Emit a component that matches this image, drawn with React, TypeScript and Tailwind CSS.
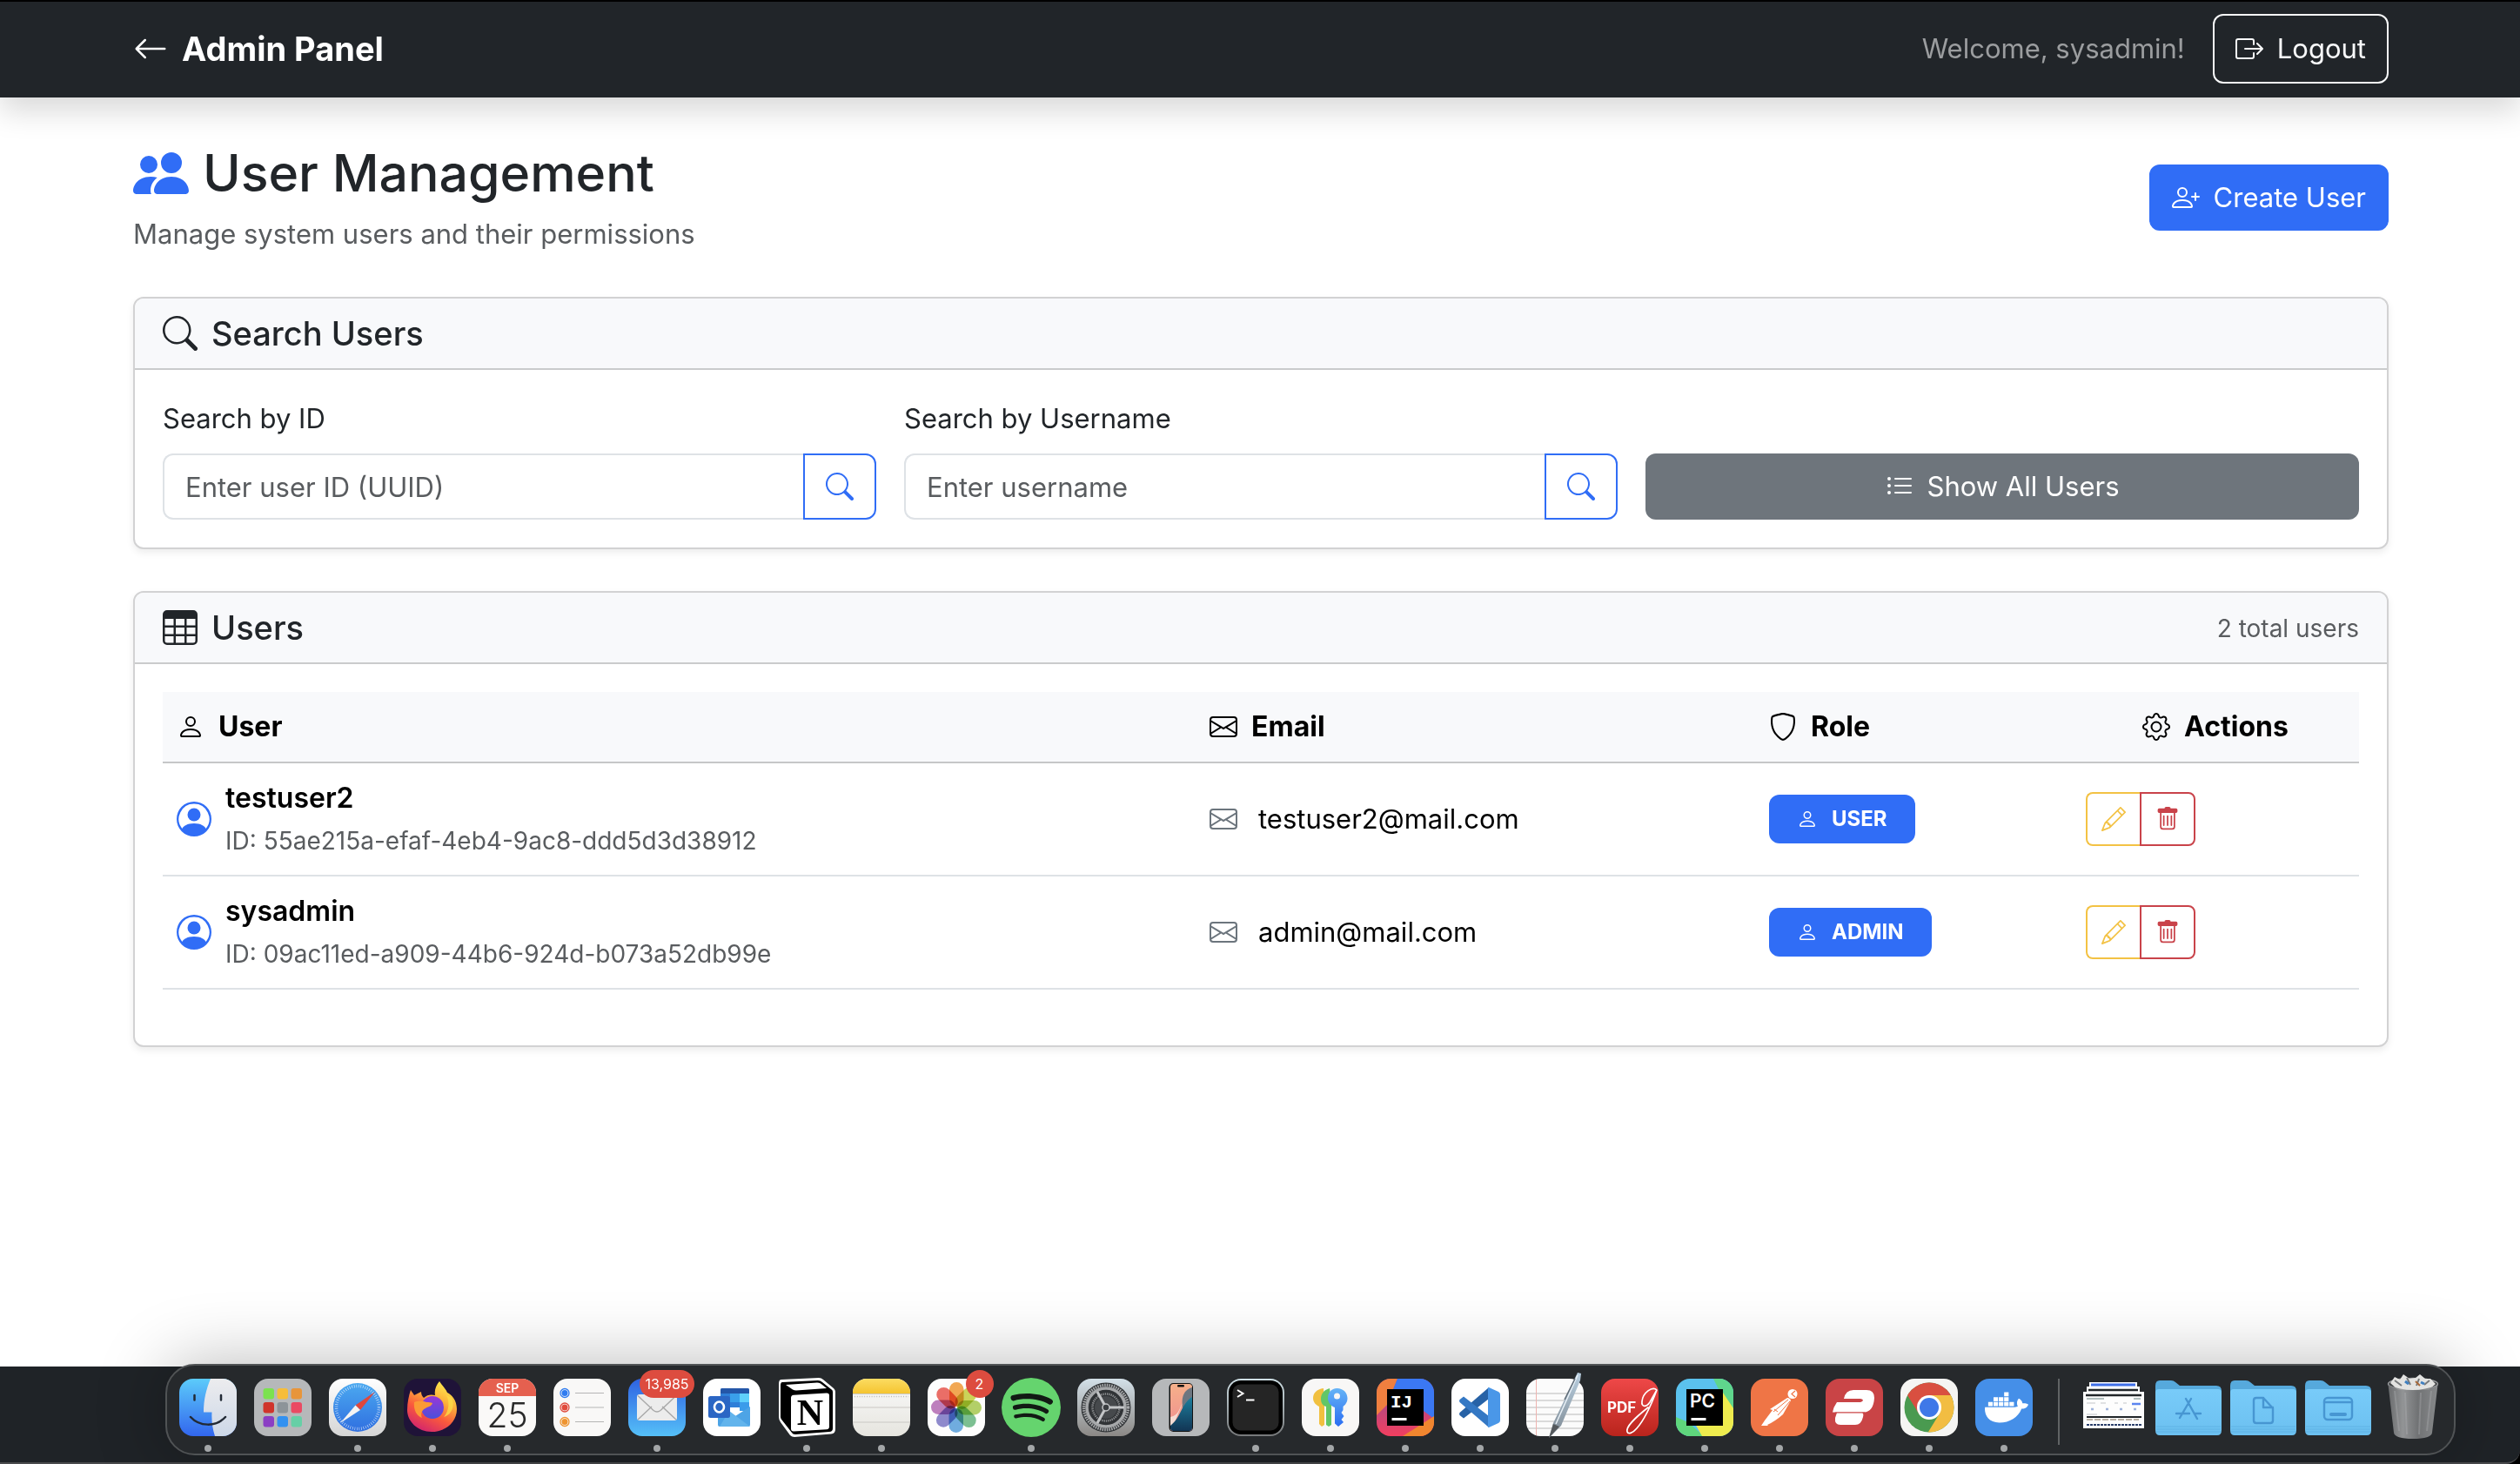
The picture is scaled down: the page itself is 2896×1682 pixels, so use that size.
import type { ReactNode } from "react";
import {
  BsArrowLeft,
  BsBoxArrowRight,
  BsEnvelope,
  BsGear,
  BsListUl,
  BsPencil,
  BsPeopleFill,
  BsPerson,
  BsPersonCircle,
  BsPersonPlus,
  BsSearch,
  BsShield,
  BsSpotify,
  BsTable,
} from "react-icons/bs";
import { FaDocker } from "react-icons/fa";

type User = { name: string; id: string; email: string; role: string };

const users: User[] = [
  { name: "testuser2", id: "55ae215a-efaf-4eb4-9ac8-ddd5d3d38912", email: "testuser2@mail.com", role: "USER" },
  { name: "sysadmin", id: "09ac11ed-a909-44b6-924d-b073a52db99e", email: "admin@mail.com", role: "ADMIN" },
];

function TrashIcon() {
  return (
    <svg viewBox="0 0 16 16" fill="currentColor" className="size-7" aria-hidden="true">
      <path d="M5.5 5.5A.5.5 0 0 1 6 6v6a.5.5 0 0 1-1 0V6a.5.5 0 0 1 .5-.5m2.5 0a.5.5 0 0 1 .5.5v6a.5.5 0 0 1-1 0V6a.5.5 0 0 1 .5-.5m3 .5a.5.5 0 0 0-1 0v6a.5.5 0 0 0 1 0z" />
      <path d="M14.5 3a1 1 0 0 1-1 1H13v9a2 2 0 0 1-2 2H5a2 2 0 0 1-2-2V4h-.5a1 1 0 0 1-1-1V2a1 1 0 0 1 1-1H6a1 1 0 0 1 1-1h2a1 1 0 0 1 1 1h3.500a1 1 0 0 1 1 1zM4.118 4 4 4.059V13a1 1 0 0 0 1 1h6a1 1 0 0 0 1-1V4.059L11.882 4z" />
    </svg>
  );
}

function Header() {
  return (
    <header className="relative z-10 border-t-2 border-black bg-[#212529] pl-0.5 shadow-[0_16px_32px_rgba(0,0,0,0.15)]">
      <div className="mx-auto flex max-w-[2640px] items-center justify-between px-6 pt-3.5 pb-4">
        <a href="#admin" className="flex items-center gap-4 text-[38px] leading-[60px] font-bold text-white">
          <BsArrowLeft className="size-10" aria-hidden="true" />
          Admin Panel
        </a>
        <div className="flex items-center gap-8">
          <span className="text-[31px] leading-[48px] text-[#9b9d9f]">Welcome, sysadmin!</span>
          <button type="button" className="flex items-center gap-4 rounded-xl border-2 border-[#f8f9fa] px-6 py-3.5 text-[31px] leading-[48px] text-[#f8f9fa]">
            <BsBoxArrowRight className="size-8" aria-hidden="true" />
            Logout
          </button>
        </div>
      </div>
    </header>
  );
}

function Card({ title, icon, aside, children }: { title: string; icon: ReactNode; aside?: ReactNode; children: ReactNode }) {
  return (
    <section className="mb-12 rounded-xl border-2 border-[#d2d2d3] bg-white shadow-[0_4px_8px_rgba(0,0,0,0.075)]">
      <div className="flex items-center justify-between rounded-t-[10px] border-b-2 border-[#cacbcc] bg-[#f8f9fb] px-8 py-4">
        <h2 className="flex items-center gap-4 text-[38px] leading-[48px] font-medium">
          {icon}
          {title}
        </h2>
        {aside}
      </div>
      <div className="p-8">{children}</div>
    </section>
  );
}

function SearchField({ id, label, placeholder }: { id: string; label: string; placeholder: string }) {
  return (
    <div>
      <label htmlFor={id} className="mb-4 block text-[31px] leading-[48px]">
        {label}
      </label>
      <div className="flex">
        <input
          id={id}
          type="text"
          placeholder={placeholder}
          className="h-[76px] min-w-0 flex-1 rounded-l-xl border-2 border-r-0 border-[#dee2e6] px-6 text-[31px] placeholder:text-[#595c5f]"
        />
        <button type="button" aria-label={label} className="flex h-[76px] items-center rounded-r-xl border-2 border-[#306df6] px-6 text-[#306df6]">
          <BsSearch className="size-8" aria-hidden="true" />
        </button>
      </div>
    </div>
  );
}

function HeadCell({ icon, text, center }: { icon: ReactNode; text: string; center?: boolean }) {
  return (
    <th scope="col" className="border-b-2 border-[#c6c7c8] bg-[#f8f9fb] p-4 text-[32px] leading-[48px] font-bold">
      <span className={center ? "flex items-center justify-center gap-4" : "flex items-center gap-4"}>
        {icon}
        {text}
      </span>
    </th>
  );
}

function UserRow({ user }: { user: User }) {
  return (
    <tr className="border-b-2 border-[#dee2e6]">
      <td className="p-4">
        <div className="flex items-center gap-4">
          <BsPersonCircle className="size-10 text-[#306df6]" aria-hidden="true" />
          <div className="text-[32px] leading-[48px]">
            <div className="font-semibold">{user.name}</div>
            <div className="h-12">
              <small className="text-[28px] text-[#595c5f]">ID: {user.id}</small>
            </div>
          </div>
        </div>
      </td>
      <td className="p-4">
        <div className="flex items-center gap-6 text-[31px] leading-[48px]">
          <BsEnvelope className="size-8 text-[#6c757d]" aria-hidden="true" />
          {user.email}
        </div>
      </td>
      <td className="p-4">
        <span className="inline-flex items-center gap-4 rounded-xl bg-[#306df6] px-8 py-4 align-middle text-2xl leading-6 font-bold text-white">
          <BsPerson className="size-6" aria-hidden="true" />
          {user.role}
        </span>
      </td>
      <td className="p-4">
        <div className="flex">
          <button type="button" aria-label={`Edit ${user.name}`} className="flex h-[62px] items-center rounded-l-lg border-2 border-r-0 border-[#f3c244] px-4 text-[#f3c244]">
            <BsPencil className="size-7" aria-hidden="true" />
          </button>
          <button type="button" aria-label={`Delete ${user.name}`} className="flex h-[62px] items-center rounded-r-lg border-2 border-[#c9434a] px-4 text-[#c9434a]">
            <TrashIcon />
          </button>
        </div>
      </td>
    </tr>
  );
}

/* ---------- Dock artwork, each drawn on a 66 x 66 tile ---------- */

function Tile({ children }: { children: ReactNode }) {
  return (
    <svg viewBox="0 0 66 66" className="size-[66px] overflow-visible" aria-hidden="true">
      {children}
    </svg>
  );
}

function Grad({ id, from, to }: { id: string; from: string; to: string }) {
  return (
    <linearGradient id={id} x1="0" y1="0" x2="0" y2="1">
      <stop offset="0" stopColor={from} />
      <stop offset="1" stopColor={to} />
    </linearGradient>
  );
}

function Finder() {
  return (
    <Tile>
      <Grad id="fdL" from="#5ccbfa" to="#3266ee" />
      <Grad id="fdR" from="#ececee" to="#cdd8e8" />
      <clipPath id="fdC"><rect width="66" height="66" rx="16" /></clipPath>
      <g clipPath="url(#fdC)">
        <rect width="66" height="66" fill="url(#fdL)" />
        <path d="M36 0C31 12 28 24 28 38.500h9.500C37 48 38 57 41 66h25V0z" fill="url(#fdR)" />
      </g>
      <path d="M17.500 19v5.500M48 19v5.500M13 44c10 11 29 12 40 0" stroke="#222a35" strokeWidth="2.500" strokeLinecap="round" fill="none" />
    </Tile>
  );
}

function Launchpad() {
  const colors = ["#7be24f", "#f6bd3a", "#e8953a", "#d0342c", "#8d9499", "#ea4a63", "#8b3fc4", "#3391f0", "#66cfa6"];
  return (
    <Tile>
      <rect width="66" height="66" rx="16" fill="#b6b8ba" />
      {colors.map((c, i) => (
        <rect key={c} x={10.5 + (i % 3) * 16} y={11 + Math.floor(i / 3) * 16} width="12.500" height="12.500" rx="3" fill={c} />
      ))}
    </Tile>
  );
}

function Safari() {
  return (
    <Tile>
      <Grad id="sfB" from="#ffffff" to="#d5d5d5" />
      <Grad id="sfC" from="#4ba9f0" to="#2f6fe0" />
      <rect width="66" height="66" rx="16" fill="url(#sfB)" />
      <circle cx="33" cy="33" r="28" fill="url(#sfC)" />
      <circle cx="33" cy="33" r="24.500" fill="none" stroke="#fff" strokeOpacity=".7" strokeWidth="3.500" strokeDasharray="0.700 1.870" />
      <path d="M53 15 30.500 30.500l5.500 5.500z" fill="#e0473c" />
      <path d="M13 51l17.500-20.500L36 36z" fill="#f4f4f4" />
    </Tile>
  );
}

function Firefox() {
  return (
    <Tile>
      <linearGradient id="ffA" x1=".8" y1="0" x2=".3" y2="1">
        <stop offset="0" stopColor="#fff24f" />
        <stop offset=".35" stopColor="#fcb13a" />
        <stop offset=".65" stopColor="#fa5a3c" />
        <stop offset="1" stopColor="#d2246e" />
      </linearGradient>
      <Grad id="ffP" from="#9a37d6" to="#4a50dc" />
      <rect width="66" height="66" rx="16" fill="#1f1338" />
      <path d="M41 3c3 5 7 8 9 13 5 2 11 9 11 19 0 15-13 26-29 26S4 49 4 36c0-9 2-17 4-23 1 2 3 4 4 6l8-4c0 3 1 5 3 7 4-4 9-4 13-3-1-6 1-11 5-16z" fill="url(#ffA)" />
      <circle cx="33" cy="33" r="13" fill="url(#ffP)" />
      <path d="M12 27c6-2 11-1 14 0 3 0 5 0 7 1-1 4-5 4-8 6-4 2-6 6-4 11-6-2-10-9-9-18z" fill="#fb9a35" />
      <path d="M49 19c4 8 3 18-3 25 10-3 13-14 9-22z" fill="#fddc48" opacity=".8" />
    </Tile>
  );
}

function CalendarTile() {
  return (
    <Tile>
      <rect width="66" height="66" rx="16" fill="#faf9f8" />
      <path d="M0 20v-4A16 16 0 0 1 16 0h34a16 16 0 0 1 16 16v4z" fill="#e5604f" />
      <text x="33" y="16" textAnchor="middle" className="fill-white font-[Inter] text-[14px] font-semibold">SEP</text>
      <text x="33" y="56" textAnchor="middle" className="fill-[#2a2a2a] font-[Inter] text-[39px] font-light">25</text>
    </Tile>
  );
}

function Reminders() {
  return (
    <Tile>
      <rect width="66" height="66" rx="16" fill="#f9f8f7" />
      {["#2f7bf0", "#e04a3c", "#ee9430"].map((c, i) => (
        <g key={c}>
          <circle cx="13" cy={16.5 + i * 16.5} r="5" fill="none" stroke={c} strokeWidth="1.300" />
          <circle cx="13" cy={16.5 + i * 16.5} r="3.500" fill={c} />
          <path d={`M25 ${16.5 + i * 16.5}h33`} stroke="#b5b5b5" strokeWidth="1.200" />
        </g>
      ))}
    </Tile>
  );
}

function MailTile() {
  return (
    <Tile>
      <Grad id="mlA" from="#2f62e2" to="#55c0f8" />
      <rect width="66" height="66" rx="16" fill="url(#mlA)" />
      <rect x="10" y="18" width="46" height="30" rx="3" fill="#ececec" />
      <path d="M11 47l16-15M55 47 39 32M11 19.500l18 17q4 3 8 0l18-17" stroke="#a8a8a8" strokeWidth="1.400" fill="none" />
    </Tile>
  );
}

function Outlook() {
  return (
    <Tile>
      <rect width="66" height="66" rx="16" fill="#fff" />
      <path d="M20 13a2 2 0 0 1 2-2h29a2 2 0 0 1 2 2v20H20z" fill="#2f7fd8" />
      <path d="M20 13a2 2 0 0 1 2-2h29a2 2 0 0 1 2 2v4H20z" fill="#2456a8" />
      <path d="M31 17h11v10H31z" fill="#3aa0ea" />
      <path d="M42 17h11v10H42z" fill="#5fd0fb" />
      <path d="M42 27h11v10H42z" fill="#3b9cea" />
      <path d="M17 33l20 10 17-11v21a2 2 0 0 1-2 2H19a2 2 0 0 1-2-2z" fill="#4da4e6" />
      <path d="M30 37l24 18H19z" fill="#62b4ec" />
      <rect x="6" y="20" width="25" height="25" rx="2.500" fill="#2b66c4" />
      <ellipse cx="18.500" cy="32.500" rx="5.500" ry="6" fill="none" stroke="#fff" strokeWidth="2.600" />
    </Tile>
  );
}

function Notion() {
  return (
    <Tile>
      <path d="M4 1 47-1q3 0 5 2l12 10q2 2 2 4v43q0 5-5 5.500L19 67q-3 0-5-2L3 50q-2-3-2-6V6q0-5 3-5z" fill="#fff" />
      <path d="M5 4 46 2q3 0 5 2l10 8q2 1 2 3v42q0 4-4 4L20 64q-3 0-4-2L5 48q-2-2-2-4V8q0-4 2-4z" fill="#000" />
      <path d="M9 7l36-2.500q2 0 4 1l7 5.500-35 2.500q-2 0-4-1z" fill="#fff" />
      <path d="M15 22q0-3 3-3.300l38-2.200q3 0 3 2.500v36q0 3-3 3.300L18 60.500q-3 0-3-3z" fill="#fff" />
      <text x="37" y="53" textAnchor="middle" className="fill-black font-[Liberation_Serif] text-[42px] font-bold">N</text>
    </Tile>
  );
}

function Notes() {
  return (
    <Tile>
      <Grad id="ntA" from="#fbdc62" to="#f5c430" />
      <Grad id="ntB" from="#fafafa" to="#e6e5df" />
      <rect width="66" height="66" rx="16" fill="url(#ntB)" />
      <path d="M0 17v-1A16 16 0 0 1 16 0h34a16 16 0 0 1 16 16v1z" fill="url(#ntA)" />
      <path d="M0 17.500h66M0 33h66M0 50h66" stroke="#c9c8c4" strokeWidth="1.200" />
      <path d="M2 20.500h62" stroke="#bcbbb8" strokeWidth="1.500" strokeDasharray="1 1.800" />
    </Tile>
  );
}

function Photos() {
  const petals = ["#f19a37", "#c5cf3f", "#a9c950", "#67b780", "#5aa1dc", "#7d78c6", "#b46bb4", "#e9574f"];
  return (
    <Tile>
      <rect width="66" height="66" rx="16" fill="#fdfdfd" />
      {petals.map((c, i) => (
        <rect key={c} x="25" y="4" width="16.500" height="28" rx="8.250" fill={c} fillOpacity=".86" transform={`rotate(${i * 45} 33 33)`} className="mix-blend-multiply" />
      ))}
    </Tile>
  );
}

function Spotify() {
  return (
    <span className="-m-px flex size-[68px] items-center justify-center rounded-full bg-[#121a14]">
      <BsSpotify className="size-[68px] text-[#65d46e]" aria-hidden="true" />
    </span>
  );
}

function SettingsTile() {
  return (
    <Tile>
      <Grad id="stA" from="#d3e0e8" to="#8b8885" />
      <rect width="66" height="66" rx="16" fill="url(#stA)" />
      <circle cx="33" cy="33" r="28.500" fill="#303336" />
      <circle cx="33" cy="33" r="25.500" fill="none" stroke="#a6a8aa" strokeWidth="3.500" strokeDasharray="1.600 1.070" />
      <circle cx="33" cy="33" r="22" fill="none" stroke="#a6a8aa" strokeWidth="3.500" />
      <circle cx="33" cy="33" r="15.500" fill="none" stroke="#8a8c8e" strokeWidth="2.500" strokeDasharray="1.300 1" />
      <circle cx="33" cy="33" r="13" fill="#46494c" />
      <path d="M33 33h21M33 33 23 15M33 33 23 51" stroke="#c3c5c7" strokeWidth="3" />
      <circle cx="33" cy="33" r="4" fill="#3a3d40" stroke="#c3c5c7" strokeWidth="1.500" />
    </Tile>
  );
}

function Phone() {
  return (
    <Tile>
      <Grad id="phA" from="#1d7f9e" to="#123554" />
      <Grad id="phB" from="#f6b08a" to="#ee8d90" />
      <clipPath id="phC"><rect x="21" y="6" width="25" height="54" rx="3.500" /></clipPath>
      <rect width="66" height="66" rx="16" fill="#b6b8ba" />
      <rect x="19.500" y="5" width="27.500" height="56" rx="5" fill="#111" />
      <g clipPath="url(#phC)">
        <rect x="21" y="6" width="25" height="54" fill="url(#phB)" />
        <path d="M46 10C34 14 34 24 35 34l11-8z" fill="#6d7680" />
        <path d="M21 44c10-2 10-10 14-16l-14 34z" fill="#f5dcd3" />
        <path d="M46 21C33 29 34 44 21 54v6h25z" fill="url(#phA)" />
      </g>
      <rect x="29" y="7" width="8" height="2.500" rx="1.250" fill="#111" />
    </Tile>
  );
}

function Terminal() {
  return (
    <Tile>
      <Grad id="tmA" from="#cfe0e6" to="#76787a" />
      <rect width="66" height="66" rx="16" fill="url(#tmA)" />
      <rect x="2" y="2" width="62" height="62" rx="14" fill="#000" />
      <rect x="6.500" y="6.500" width="53" height="53" rx="9" fill="#252525" />
      <path d="M12 13l6.500 4L12 21M22 24.500h9.500" stroke="#fff" strokeWidth="2" fill="none" />
    </Tile>
  );
}

function Passwords() {
  return (
    <Tile>
      <rect width="66" height="66" rx="16" fill="#f8f7f6" />
      <path d="M25 11c-8 1-12 6-12 11 0 5 3 8 7 10v20l3 3 3-2V31z" fill="#f1c03f" />
      <path d="M32 11c-7 2-10 7-10 12 0 5 2 8 6 9v21l3 2 3-2V30z" fill="#62c667" />
      <Grad id="pwA" from="#66b4f6" to="#2a6df2" />
      <path d="M40.500 11c7 0 12 5 12 11.500 0 5-3 8-5 9.500v4l-2 3 3 4-3 4 2.500 3-6 5-4-3.500V33c-5-2-8-6-8-10.500C30 16 34 11 40.500 11zm0 5.500a3.500 3.500 0 1 0 0 7 3.500 3.500 0 0 0 0-7z" fill="url(#pwA)" />
    </Tile>
  );
}

function IntelliJ() {
  return (
    <Tile>
      <clipPath id="ijC"><rect width="66" height="66" rx="16" /></clipPath>
      <Grad id="ijA" from="#8a4f9c" to="#f23f5f" />
      <g clipPath="url(#ijC)">
        <rect width="66" height="66" fill="url(#ijA)" />
        <path d="M0 0h24L12 30 0 42z" fill="#ef7f3f" />
        <path d="M24 0h42v46L50 34 15 22z" fill="#3b78f3" />
        <path d="M66 43v23H30z" fill="#f0862f" />
      </g>
      <rect x="12" y="12" width="42" height="42" fill="#000" />
      <text x="16" y="33" className="fill-white font-[Liberation_Mono] text-[21px] font-bold">IJ</text>
      <rect x="17.500" y="45" width="17" height="3" fill="#fff" />
    </Tile>
  );
}

function VsCode() {
  return (
    <Tile>
      <rect width="66" height="66" rx="16" fill="#fff" />
      <path d="M43 10v13L14 45.500 9.500 42q-1-1.500 0-3z" fill="#2762a6" />
      <path d="M43 56V43L14 20.500 9.500 24q-1 1.500 0 3z" fill="#3478c4" />
      <path d="M43 10l11 5q2 1 2 3v30q0 2-2 3l-11 5q-1 0-1-1V11q0-1 1-1z" fill="#4a97e8" />
    </Tile>
  );
}

function TextEdit() {
  return (
    <Tile>
      <Grad id="teA" from="#b9cfe0" to="#7d8892" />
      <rect width="66" height="66" rx="16" fill="#fbfbfb" />
      <path d="M0 17h66M0 25h66M0 33h66M0 41h66M0 49h66M2 57h62" stroke="#b9b9b9" strokeWidth="1.200" />
      <path d="M11.500 1v64" stroke="#eeb4b0" />
      <path d="M59-7l4 1-1 8-22 52-14 14 5-17z" fill="url(#teA)" />
      <path d="M59-4 34 52" stroke="#e9f1f7" strokeWidth="1.500" />
      <path d="M31 52l7 3-12 13z" fill="#55595d" />
      <path d="M56 0 44 24" stroke="#5f6b76" strokeWidth="1.500" />
    </Tile>
  );
}

function PdfTile() {
  return (
    <Tile>
      <Grad id="pdA" from="#ee4848" to="#b9241c" />
      <rect width="66" height="66" rx="16" fill="url(#pdA)" />
      <text x="7" y="39" className="fill-white font-[Inter] text-[17px] font-bold">PDF</text>
      <path d="M64 13c-5-5-16 3-17 13-1 7 5 7 9 1l8-14c-6 16-14 34-23 44-5 6-10 7-11 4-2-6 9-16 24-28" stroke="#fff" strokeWidth="1.700" fill="none" strokeLinecap="round" />
    </Tile>
  );
}

function PyCharm() {
  return (
    <Tile>
      <clipPath id="pcC"><rect width="66" height="66" rx="16" /></clipPath>
      <g clipPath="url(#pcC)">
        <rect width="66" height="66" fill="#5bc2ee" />
        <path d="M43 0h23v36L54 22z" fill="#5fd68c" />
        <path d="M0 44l14 6 18 16H0z" fill="#5fd67c" />
        <path d="M66 34v32H30l-8-14h32V16z" fill="#efec4e" />
      </g>
      <rect x="12" y="12" width="42" height="42" fill="#000" />
      <text x="16" y="33" className="fill-white font-[Inter] text-[21px] font-semibold">PC</text>
      <rect x="17.500" y="45" width="17" height="3" fill="#fff" />
    </Tile>
  );
}

function Postman() {
  return (
    <Tile>
      <rect width="66" height="66" rx="16" fill="#ef7546" />
      <circle cx="48" cy="17.500" r="5.500" fill="#fff" />
      <path d="M51 14l-4 3.500 4 3.500" stroke="#ef7546" strokeWidth="1.200" fill="none" />
      <path d="M42 22q3 0 4 3L37 41q-9 8-18 12l1 1h-8l4-6 9-12-3-1z" fill="#fff" />
      <path d="M43 24 26 38M45 26 31 42M27 35l4 3" stroke="#ef7546" strokeWidth="1" />
    </Tile>
  );
}

function RedTile() {
  return (
    <Tile>
      <rect width="66" height="66" rx="16" fill="#c94446" />
      <path d="M21 23q2-10 11-10h15q9 0 9 9-1 16-12 16.500H8q1-6 5-11.500h27q3-1 3-2.500-1-1.500-3-1.500z" fill="#fff" />
      <path d="M13 39h29q2 1 1 5-2 9-9 9H17q-7 0-6-8z" fill="#fff" />
      <path d="M11 39h34" stroke="#c94446" strokeWidth="1.200" />
    </Tile>
  );
}

function Chrome() {
  return (
    <Tile>
      <rect width="66" height="66" rx="16" fill="#f5f5f3" />
      <clipPath id="chC"><circle cx="33" cy="33" r="28.500" /></clipPath>
      <g clipPath="url(#chC)">
        <rect width="66" height="66" fill="#4a9a50" />
        <path d="M0 0h66v19H33L21 40 5 14z" fill="#d94f40" />
        <path d="M33 19h33v47H29l16-26z" fill="#f2bd42" />
      </g>
      <circle cx="33" cy="33" r="14" fill="#fff" />
      <circle cx="33" cy="33" r="11" fill="#3f78e8" />
    </Tile>
  );
}

function DockerTile() {
  return (
    <span className="flex size-[66px] items-center justify-center rounded-2xl bg-[#458fe8] pl-1.5">
      <FaDocker className="size-[50px] text-white" aria-hidden="true" />
    </span>
  );
}

function WindowThumb() {
  return (
    <Tile>
      <rect x="5" y="4" width="55" height="14" fill="#fff" />
      <path d="M7 7h51" stroke="#3f6fe8" strokeWidth="3" />
      <rect x="2" y="9" width="61" height="14" fill="#fff" />
      <path d="M4 13h57" stroke="#212529" strokeWidth="2.500" />
      <rect x="-2" y="15" width="70" height="42" fill="#fdfdfd" />
      <path d="M1 19h64" stroke="#212529" strokeWidth="2.500" />
      <path d="M2 23h20M56 23h8" stroke="#9aa" strokeWidth="1.500" />
      <path d="M2 28h10M18 28h6M34 28h4M44 28h4M2 41h12" stroke="#c3c6ca" strokeWidth="1.200" />
      <path d="M54 29h10" stroke="#5b84f0" strokeWidth="2.500" />
      <path d="M7 35h3M24 35h3M40 35h3M56 35h3" stroke="#9fb3dc" strokeWidth="2.500" />
      <path d="M2 44h63" stroke="#212529" strokeWidth="2" />
      <path d="M2 47h60" stroke="#b9b0a4" strokeWidth="2" strokeDasharray="7 2" />
      <path d="M2 53h63" stroke="#2b3f6b" strokeWidth="2" strokeDasharray="3 1" />
    </Tile>
  );
}

function Folder({ id, children }: { id: string; children: ReactNode }) {
  return (
    <Tile>
      <Grad id={id} from="#78cbf9" to="#6cc0f0" />
      <path d="M-5 8q0-6 5-6h13q3 0 5 2l5 4h42q6 0 6 6v10H-5z" fill="#56a9dc" />
      <path d="M-5 16q0-4 4-4h68q4 0 4 4v43q0 6-5 6H0q-5 0-5-6z" fill={`url(#${id})`} />
      <path d="M-4 55h74M-4 58h74M-4 61h74" stroke="#5fb2e4" strokeWidth="1" />
      <g stroke="#4796d2" strokeWidth="2.400" fill="none" strokeLinecap="round" strokeLinejoin="round">{children}</g>
    </Tile>
  );
}

function Trash() {
  return (
    <Tile>
      <linearGradient id="trA" x1="0" y1="0" x2="1" y2="0">
        <stop offset="0" stopColor="#6f7173" />
        <stop offset=".3" stopColor="#9b9d9f" />
        <stop offset=".6" stopColor="#77797b" />
        <stop offset="1" stopColor="#8f9193" />
      </linearGradient>
      <ellipse cx="33" cy="6" rx="28.500" ry="6.500" fill="#3c3e40" stroke="#9a9c9e" strokeWidth="1.500" />
      <path d="M7 5l5-7 6 3 4-6 7 5 7-1 5-4 6 5 6 0 6 6-8 7H16z" fill="#e3e3e1" />
      <path d="M12 2l8 6M26-1l4 8M40 0l-3 8M52 2l-6 5" stroke="#77797b" strokeWidth="2" />
      <path d="M24 3l4 3M42 4l4 2" stroke="#3f7fc0" strokeWidth="3" />
      <path d="M36 3l5 5" stroke="#a8693a" strokeWidth="2" />
      <path d="M4.500 7q28 12 57 0L55 62q-1 7-22 7t-22-7z" fill="url(#trA)" fillOpacity=".92" />
      <path d="M12 14l5 46M24 16l2 48M42 16l-2 48M54 14l-5 46" stroke="#b9bbbd" strokeOpacity=".3" strokeWidth="2" />
    </Tile>
  );
}

type DockItem = { name: string; art: ReactNode; open?: boolean; badge?: string };

const apps: DockItem[] = [
  { name: "Finder", art: <Finder />, open: true },
  { name: "Launchpad", art: <Launchpad /> },
  { name: "Safari", art: <Safari />, open: true },
  { name: "Firefox", art: <Firefox />, open: true },
  { name: "Calendar", art: <CalendarTile />, open: true },
  { name: "Reminders", art: <Reminders /> },
  { name: "Mail", art: <MailTile />, open: true, badge: "13,985" },
  { name: "Outlook", art: <Outlook /> },
  { name: "Notion", art: <Notion />, open: true },
  { name: "Notes", art: <Notes />, open: true },
  { name: "Photos", art: <Photos />, badge: "2" },
  { name: "Spotify", art: <Spotify />, open: true },
  { name: "System Settings", art: <SettingsTile /> },
  { name: "iPhone Mirroring", art: <Phone /> },
  { name: "Terminal", art: <Terminal />, open: true },
  { name: "Passwords", art: <Passwords />, open: true },
  { name: "IntelliJ IDEA", art: <IntelliJ />, open: true },
  { name: "Visual Studio Code", art: <VsCode />, open: true },
  { name: "TextEdit", art: <TextEdit />, open: true },
  { name: "PDFgear", art: <PdfTile />, open: true },
  { name: "PyCharm", art: <PyCharm />, open: true },
  { name: "Postman", art: <Postman />, open: true },
  { name: "ExpressVPN", art: <RedTile />, open: true },
  { name: "Chrome", art: <Chrome />, open: true },
  { name: "Docker", art: <DockerTile />, open: true },
];

const places: DockItem[] = [
  { name: "Minimized window", art: <WindowThumb /> },
  {
    name: "Applications",
    art: (
      <Folder id="foA">
        <path d="M30 23l3 5 3-5M33 28 23 45M33 28l10 18M19 40h15M41 40h6" />
      </Folder>
    ),
  },
  {
    name: "Documents",
    art: (
      <Folder id="foB">
        <path d="M25 22h8l11 12v14q0 3-3 3H25q-3 0-3-3V25q0-3 3-3zM33 22v11h11" />
      </Folder>
    ),
  },
  {
    name: "Desktop",
    art: (
      <Folder id="foC">
        <rect x="17" y="22" width="32" height="25" rx="4" />
        <path d="M17 27h32M25 41h16" />
        <path d="M25 41h16" strokeWidth="4" />
      </Folder>
    ),
  },
  { name: "Trash", art: <Trash /> },
];

function DockButton({ item }: { item: DockItem }) {
  return (
    <button type="button" aria-label={item.name} className="relative flex w-[66px] flex-col items-center gap-2.5">
      {item.art}
      {item.open && <span className="size-2 rounded-full bg-[#a3a6a8]" />}
      {item.badge && (
        <span className="absolute -top-2.5 -right-2.5 flex h-8 min-w-8 items-center justify-center rounded-full bg-[#dd4c3f] px-1.5 text-base leading-8 text-white">
          {item.badge}
        </span>
      )}
    </button>
  );
}

function Dock() {
  return (
    <footer className="relative h-28 rounded-br-2xl border-b-2 border-[#4a4b4d] bg-[#1f2327]">
      <div className="absolute inset-x-0 bottom-2 flex justify-center pl-[115px]">
        <nav aria-label="Dock" className="flex h-[105px] items-start gap-5 rounded-[34px] border-2 border-[#505355] bg-[#26292c] px-3.5 pt-[15px] shadow-[0_0_80px_rgba(0,0,0,0.28)]">
          {apps.map((item) => (
            <DockButton key={item.name} item={item} />
          ))}
          <span className="flex w-5 justify-center">
            <span className="h-[76px] w-0.5 bg-[#606365]" />
          </span>
          {places.map((item) => (
            <DockButton key={item.name} item={item} />
          ))}
        </nav>
      </div>
    </footer>
  );
}

export default function App() {
  return (
    <div className="flex min-h-screen flex-col overflow-x-hidden bg-black font-['Inter','Liberation_Sans',sans-serif] text-[#212529]">
      <Header />
      <div className="flex-1 bg-white pl-0.5">
        <main className="mx-auto max-w-[2640px] px-6 pt-12">
          <div className="mb-12 flex items-center justify-between">
            <div>
              <h1 className="mb-2 flex items-center gap-4 text-[59px] leading-[77px] font-medium">
                <BsPeopleFill className="size-16 text-[#306df6]" aria-hidden="true" />
                User Management
              </h1>
              <p className="text-[31px] leading-[48px] text-[#595c5f]">Manage system users and their permissions</p>
            </div>
            <button type="button" className="flex items-center gap-4 rounded-xl border-2 border-[#306df6] bg-[#306df6] px-6 py-3 text-[31px] leading-[48px] text-white">
              <BsPersonPlus className="size-8" aria-hidden="true" />
              Create User
            </button>
          </div>

          <Card title="Search Users" icon={<BsSearch className="size-10" aria-hidden="true" />}>
            <form className="grid grid-cols-3 items-end gap-8">
              <SearchField id="search-id" label="Search by ID" placeholder="Enter user ID (UUID)" />
              <SearchField id="search-username" label="Search by Username" placeholder="Enter username" />
              <button type="button" className="flex h-[76px] items-center justify-center gap-4 rounded-xl bg-[#6e757c] text-[31px] leading-[48px] text-white">
                <BsListUl className="size-8" aria-hidden="true" />
                Show All Users
              </button>
            </form>
          </Card>

          <Card
            title="Users"
            icon={<BsTable className="size-10" aria-hidden="true" />}
            aside={
              <span className="h-12 text-[31px] leading-[48px]">
                <small className="text-[28px] text-[#595c5f]">2 total users</small>
              </span>
            }
          >
            <table className="mb-8 w-full table-fixed border-collapse text-left text-black">
              <colgroup>
                <col />
                <col className="w-[643px]" />
                <col className="w-[364px]" />
                <col className="w-[330px]" />
              </colgroup>
              <thead>
                <tr>
                  <HeadCell icon={<BsPerson className="size-8" aria-hidden="true" />} text="User" />
                  <HeadCell icon={<BsEnvelope className="size-8" aria-hidden="true" />} text="Email" />
                  <HeadCell icon={<BsShield className="size-8" aria-hidden="true" />} text="Role" />
                  <HeadCell icon={<BsGear className="size-8" aria-hidden="true" />} text="Actions" center />
                </tr>
              </thead>
              <tbody>
                {users.map((user) => (
                  <UserRow key={user.id} user={user} />
                ))}
              </tbody>
            </table>
          </Card>
        </main>
      </div>
      <Dock />
    </div>
  );
}
